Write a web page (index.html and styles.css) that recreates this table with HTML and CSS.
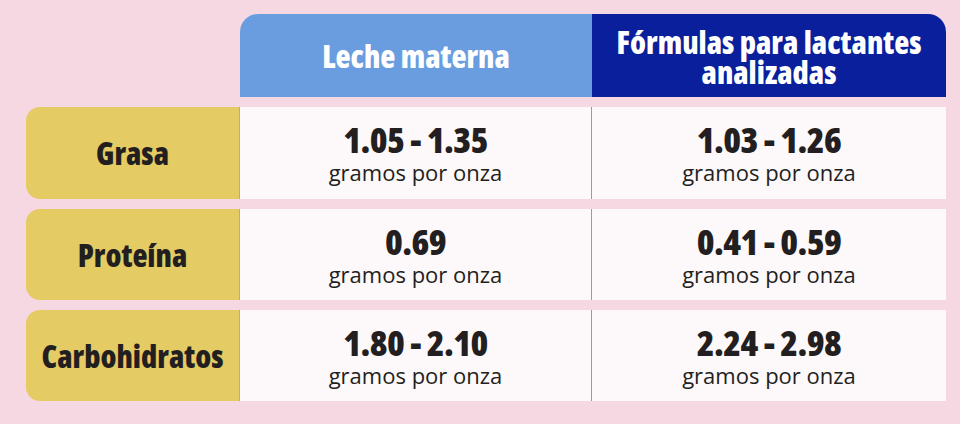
FILE: index.html
```html
<!DOCTYPE html>
<html lang="es">
<head>
<meta charset="utf-8">
<title>Leche materna vs fórmulas</title>
<link rel="stylesheet" href="styles.css">
</head>
<body>
<div class="table">
  <div class="corner"></div>
  <div class="head head-milk">Leche materna</div>
  <div class="head head-formula">Fórmulas para lactantes<br>analizadas</div>

  <div class="label">Grasa</div>
  <div class="val val-left"><span class="num">1.05 - 1.35</span><span class="unit">gramos por onza</span></div>
  <div class="val"><span class="num">1.03 - 1.26</span><span class="unit">gramos por onza</span></div>

  <div class="label">Proteína</div>
  <div class="val val-left"><span class="num">0.69</span><span class="unit">gramos por onza</span></div>
  <div class="val"><span class="num">0.41 - 0.59</span><span class="unit">gramos por onza</span></div>

  <div class="label">Carbohidratos</div>
  <div class="val val-left"><span class="num">1.80 - 2.10</span><span class="unit">gramos por onza</span></div>
  <div class="val"><span class="num">2.24 - 2.98</span><span class="unit">gramos por onza</span></div>
</div>
</body>
</html>
```

FILE: styles.css
```css
html, body {
  margin: 0;
  padding: 0;
  background: #f6d8e2;
}
body {
  width: 960px;
  height: 424px;
  overflow: hidden;
}
.table {
  display: grid;
  grid-template-columns: 214px 352px 354px;
  grid-template-rows: 83px 92px 91px 91px;
  row-gap: 10px;
  margin: 14px 0 0 26px;
  font-family: "Open Sans", sans-serif;
  font-stretch: 80%;
  font-weight: 800;
  color: #231f20;
}
.head {
  display: flex;
  align-items: center;
  justify-content: center;
  text-align: center;
  color: #ffffff;
  font-size: 31px;
  line-height: 30px;
}
.head-milk {
  background: #6a9ddf;
  border-top-left-radius: 18px;
}
.head-formula {
  background: #0a1f9c;
  border-top-right-radius: 18px;
  padding-top: 2px;
}
.label {
  display: flex;
  align-items: center;
  justify-content: center;
  background: #e4cb64;
  border-radius: 14px 0 0 14px;
  border-right: 1px solid #bfae68;
  font-size: 31px;
}
.val {
  display: flex;
  flex-direction: column;
  align-items: center;
  justify-content: center;
  background: #fdf8fa;
}
.val-left {
  border-right: 1px solid #9c9a9b;
}
.num {
  font-size: 36px;
  line-height: 36px;
  letter-spacing: -0.6px;
  padding-top: 2px;
}
.unit {
  font-family: "Open Sans", sans-serif;
  font-stretch: 100%;
  font-weight: normal;
  font-size: 22px;
  line-height: 28px;
}
```
